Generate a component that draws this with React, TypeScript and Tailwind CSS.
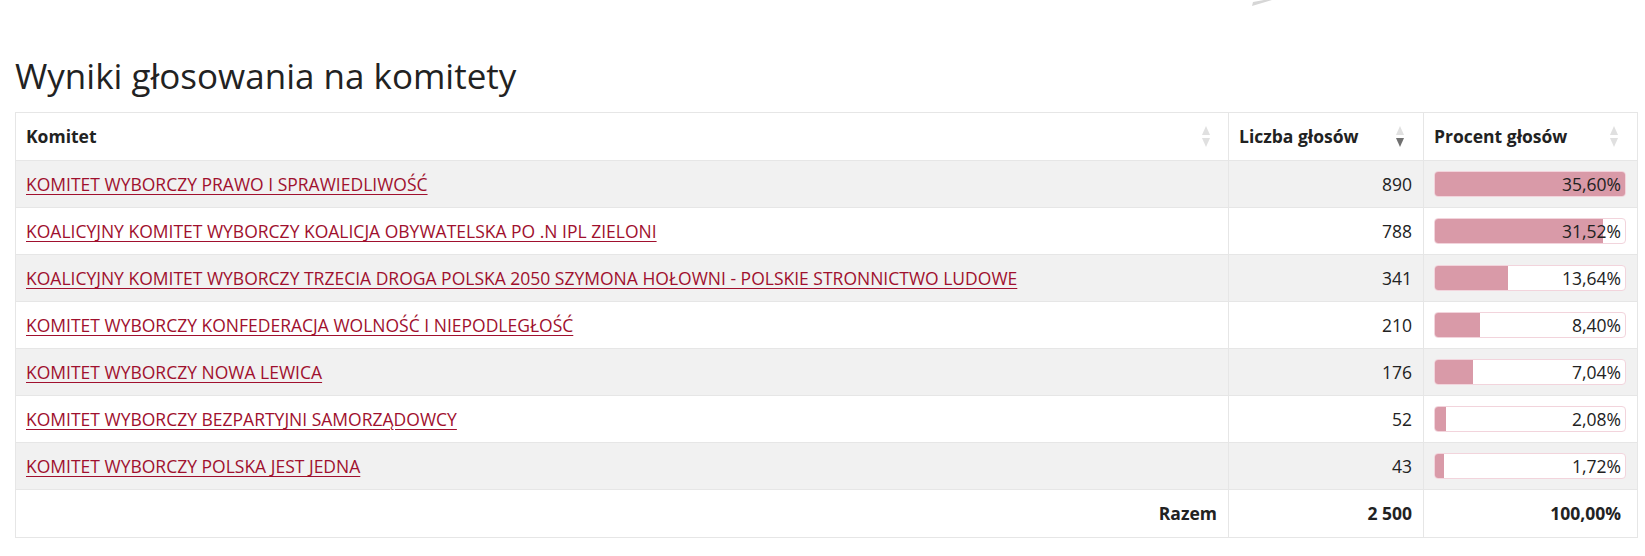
const rows = [
  { name: "KOMITET WYBORCZY PRAWO I SPRAWIEDLIWOŚĆ", votes: "890", pct: 35.6 },
  { name: "KOALICYJNY KOMITET WYBORCZY KOALICJA OBYWATELSKA PO .N IPL ZIELONI", votes: "788", pct: 31.52 },
  { name: "KOALICYJNY KOMITET WYBORCZY TRZECIA DROGA POLSKA 2050 SZYMONA HOŁOWNI - POLSKIE STRONNICTWO LUDOWE", votes: "341", pct: 13.64 },
  { name: "KOMITET WYBORCZY KONFEDERACJA WOLNOŚĆ I NIEPODLEGŁOŚĆ", votes: "210", pct: 8.4 },
  { name: "KOMITET WYBORCZY NOWA LEWICA", votes: "176", pct: 7.04 },
  { name: "KOMITET WYBORCZY BEZPARTYJNI SAMORZĄDOWCY", votes: "52", pct: 2.08 },
  { name: "KOMITET WYBORCZY POLSKA JEST JEDNA", votes: "43", pct: 1.72 },
];

function SortIcon({ active }: { active?: boolean }) {
  return (
    <svg width="8" height="22" viewBox="0 0 8 22" className="shrink-0">
      <polygon points="4,0 8,9 0,9" fill="#e0e0e0" />
      <polygon points="0,12 8,12 4,21" fill={active ? "#707070" : "#e0e0e0"} />
    </svg>
  );
}

const fmt = (n: number) => n.toFixed(2).replace(".", ",") + "%";

export default function App() {
  return (
    <div className="w-[1645px] h-[556px] bg-white overflow-hidden font-['Open_Sans',sans-serif] text-[#222]">
      <div className="h-[6px] pl-[1250px]">
        <svg width="22" height="6" viewBox="0 0 22 6">
          <polygon points="2,6 22,0 14,0 3,2" fill="#d6d6d6" />
        </svg>
      </div>
      <div className="px-[15px]">
        <h2 className="text-[35px] leading-[44px] font-normal mt-[48px] mb-[14px] text-[#222]">
          Wyniki głosowania na komitety
        </h2>
        <table className="w-[1622px] border-collapse border border-[#e6e6e6] text-[17.5px] table-fixed">
          <colgroup>
            <col className="w-[1213px]" />
            <col className="w-[195px]" />
            <col className="w-[214px]" />
          </colgroup>
          <thead>
            <tr className="h-[48px]">
              <th className="border border-[#e6e6e6] px-[10px] text-left font-bold">
                <div className="flex items-center justify-between">
                  <span>Komitet</span>
                  <span className="mr-[8px]"><SortIcon /></span>
                </div>
              </th>
              <th className="border border-[#e6e6e6] px-[10px] text-left font-bold">
                <div className="flex items-center justify-between">
                  <span>Liczba głosów</span>
                  <span className="mr-[9px]"><SortIcon active /></span>
                </div>
              </th>
              <th className="border border-[#e6e6e6] px-[10px] text-left font-bold">
                <div className="flex items-center justify-between">
                  <span>Procent głosów</span>
                  <span className="mr-[9px]"><SortIcon /></span>
                </div>
              </th>
            </tr>
          </thead>
          <tbody>
            {rows.map((r, i) => (
              <tr key={r.name} className={`h-[47px] ${i % 2 === 0 ? "bg-[#f1f1f1]" : "bg-white"}`}>
                <td className="border border-[#e6e6e6] px-[10px]">
                  <a href="#" className="text-[#a0102e] underline decoration-1 underline-offset-[3px]">
                    {r.name}
                  </a>
                </td>
                <td className="border border-[#e6e6e6] px-[11px] text-right">{r.votes}</td>
                <td className="border border-[#e6e6e6] pl-[10px] pr-[11px]">
                  <div className="relative h-[26px] rounded-[4px] border border-[#f2d4dc] bg-white overflow-hidden">
                    <div className="h-full bg-[#d99aa8]" style={{ width: `${r.pct / 35.6 * 100}%` }} />
                    <span className="absolute right-[4px] top-0 leading-[24px]">{fmt(r.pct)}</span>
                  </div>
                </td>
              </tr>
            ))}
            <tr className="h-[48px] bg-white font-bold">
              <td className="border border-[#e6e6e6] px-[11px] text-right">Razem</td>
              <td className="border border-[#e6e6e6] px-[11px] text-right">2 500</td>
              <td className="border border-[#e6e6e6] pl-[10px] pr-[16px] text-right">100,00%</td>
            </tr>
          </tbody>
        </table>
      </div>
    </div>
  );
}
